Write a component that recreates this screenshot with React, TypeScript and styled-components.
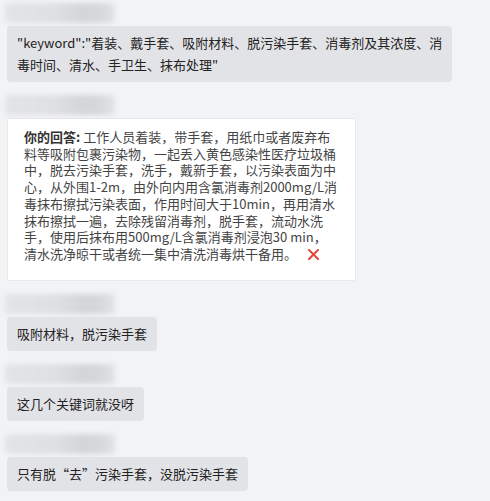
import React from "react";
import styled, { createGlobalStyle } from "styled-components";

const Global = createGlobalStyle`
  html, body {
    margin: 0;
    padding: 0;
    background: #f2f3f5;
  }
  body {
    font-family: "Noto Sans CJK SC", "Noto Sans", sans-serif;
  }
`;

const Page = styled.div`
  width: 490px;
  height: 501px;
  overflow: hidden;
  box-sizing: border-box;
  padding: 3px 0 0 7px;
  display: flex;
  flex-direction: column;
  gap: 13px;
  background: #f2f3f5;
`;

const Group = styled.div`
  display: flex;
  flex-direction: column;
  align-items: flex-start;
  gap: 3px;
`;

const BlurName = styled.div<{ $w: number }>`
  width: ${(p) => p.$w}px;
  height: 20px;
  margin-left: -2px;
  border-radius: 4px;
  background: linear-gradient(
    90deg,
    #e3e4e7 0%,
    #dfe0e3 45%,
    #d4d5d8 72%,
    #d6d7da 85%,
    #e2e3e6 100%
  );
  filter: blur(2.5px);
`;

const Bubble = styled.div`
  box-sizing: border-box;
  padding: 6px 10px;
  background: #e2e3e7;
  border-radius: 4px;
  color: #222;
  font-size: 13px;
  line-height: 22px;
  white-space: nowrap;
`;

const Card = styled.div`
  box-sizing: border-box;
  width: 349px;
  height: 163px;
  padding: 10px 15px 0 16px;
  background: #ffffff;
  border: 1px solid #e7e8eb;
  border-radius: 2px;
  color: #444;
  font-size: 13px;
  line-height: 16.7px;
  white-space: nowrap;
`;

const Label = styled.span`
  font-weight: 700;
  color: #333;
`;

const Wrong = styled.svg`
  width: 11px;
  height: 11px;
  margin-left: 11px;
  vertical-align: -1px;
`;

const cardLines = [
  "料等吸附包裹污染物，一起丢入黄色感染性医疗垃圾桶",
  "中，脱去污染手套，洗手，戴新手套，以污染表面为中",
  "心，从外围1-2m，由外向内用含氯消毒剂2000mg/L消",
  "毒抹布擦拭污染表面，作用时间大于10min，再用清水",
  "抹布擦拭一遍，去除残留消毒剂，脱手套，流动水洗",
  "手，使用后抹布用500mg/L含氯消毒剂浸泡30 min，",
];

export default function App() {
  return (
    <>
      <Global />
      <Page>
        <Group>
          <BlurName $w={110} />
          <Bubble>
            "keyword":"着装、戴手套、吸附材料、脱污染手套、消毒剂及其浓度、消
            <br />
            毒时间、清水、手卫生、抹布处理"
          </Bubble>
        </Group>
        <Group>
          <BlurName $w={110} />
          <Card>
            <Label>你的回答: </Label>工作人员着装，带手套，用纸巾或者废弃布
            {cardLines.map((l) => (
              <React.Fragment key={l}>
                <br />
                {l}
              </React.Fragment>
            ))}
            <br />
            清水洗净晾干或者统一集中清洗消毒烘干备用。
            <Wrong viewBox="0 0 11 11">
              <path
                d="M1 1 L10 10 M10 1 L1 10"
                stroke="#e2473a"
                strokeWidth="2"
                strokeLinecap="round"
              />
            </Wrong>
          </Card>
        </Group>
        <Group>
          <BlurName $w={110} />
          <Bubble>吸附材料，脱污染手套</Bubble>
        </Group>
        <Group>
          <BlurName $w={110} />
          <Bubble>这几个关键词就没呀</Bubble>
        </Group>
        <Group>
          <BlurName $w={110} />
          <Bubble>只有脱“去”污染手套，没脱污染手套</Bubble>
        </Group>
      </Page>
    </>
  );
}
